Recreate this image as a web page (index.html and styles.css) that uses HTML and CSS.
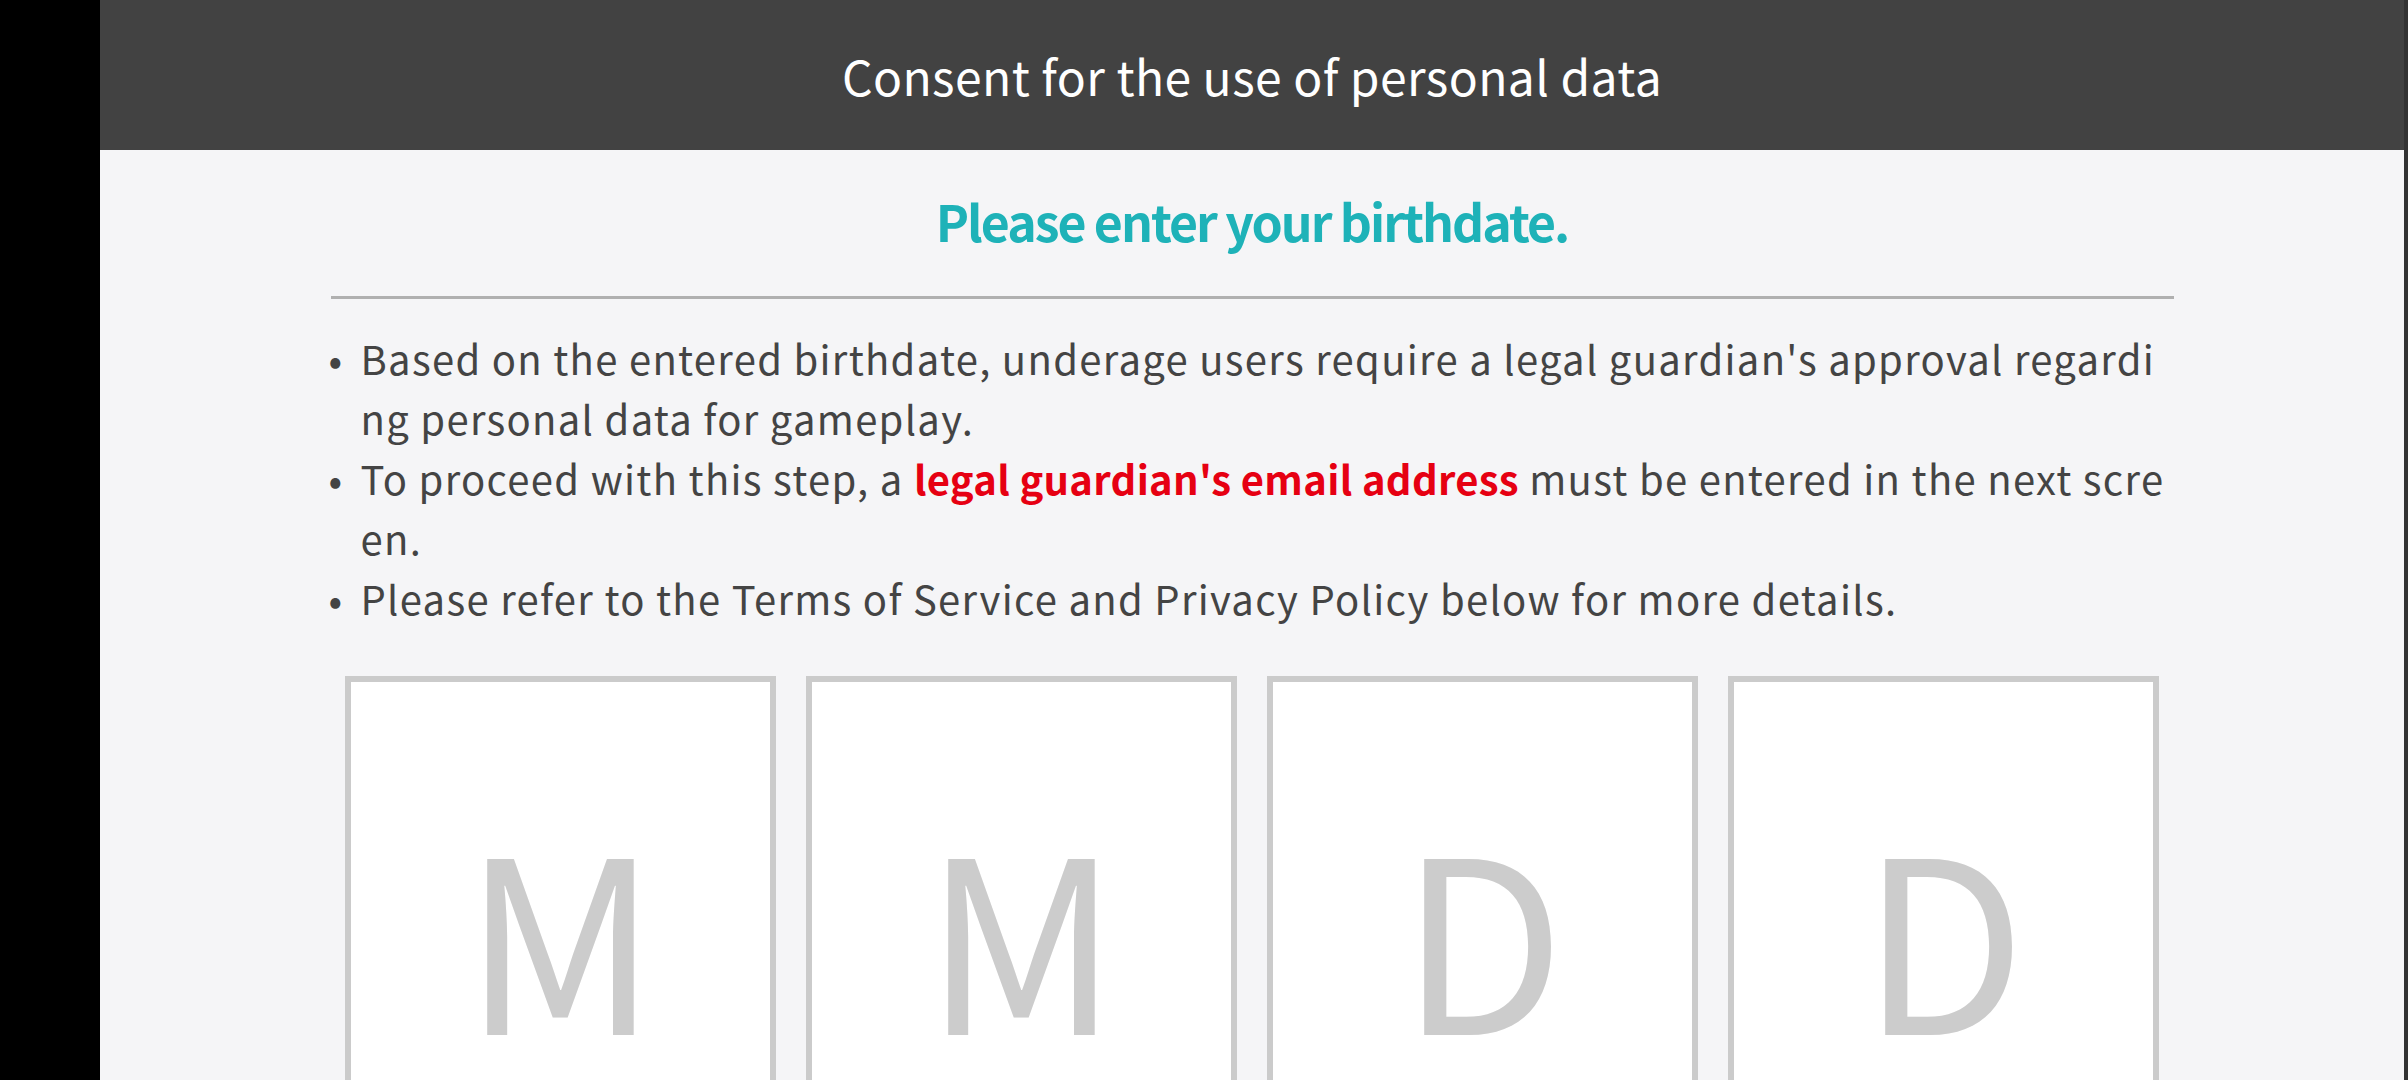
FILE: index.html
```html
<!DOCTYPE html>
<html lang="en">
<head>
<meta charset="utf-8">
<title>Consent for the use of personal data</title>
<link rel="stylesheet" href="styles.css">
</head>
<body>
<div class="app">
  <div class="side-left"></div>
  <main class="panel">
    <header class="topbar">Consent for the use of personal data</header>
    <section class="content">
      <h1 class="subtitle">Please enter your birthdate.</h1>
      <hr class="divider">
      <ul class="notes">
        <li><span class="dot">•</span><span class="txt">Based on the entered birthdate, underage users require a legal guardian's approval regarding personal data for gameplay.</span></li>
        <li><span class="dot">•</span><span class="txt">To proceed with this step, a <strong class="hl">legal guardian's email address</strong> must be entered in the next screen.</span></li>
        <li><span class="dot">•</span><span class="txt">Please refer to the Terms of Service and Privacy Policy below for more details.</span></li>
      </ul>
      <div class="digits">
        <div class="digit">M</div>
        <div class="digit">M</div>
        <div class="digit">D</div>
        <div class="digit">D</div>
      </div>
    </section>
  </main>
  <div class="side-right"></div>
</div>
</body>
</html>
```

FILE: styles.css
```css
html, body {
  margin: 0;
  padding: 0;
  height: 100%;
  overflow: hidden;
  background: #000;
}

body {
  font-family: "Noto Sans CJK JP", "Noto Sans", sans-serif;
}

.app {
  display: flex;
  height: 1080px;
}

.side-left {
  width: 100px;
  flex: none;
  background: #000;
}

.side-right {
  width: 4px;
  flex: none;
  background: #333;
}

.panel {
  flex: 1;
  background: #f5f5f7;
  display: flex;
  flex-direction: column;
  overflow: hidden;
}

.topbar {
  height: 150px;
  line-height: 150px;
  background: #424242;
  color: #fff;
  font-size: 48px;
  letter-spacing: 0.4px;
  text-align: center;
  flex: none;
}

.content {
  width: 1843px;
  margin: 0 auto;
}

.subtitle {
  margin: 31px 0 0;
  font-size: 50px;
  line-height: 78px;
  font-weight: 700;
  letter-spacing: -2px;
  color: #1eb2b8;
  text-align: center;
}

.divider {
  margin: 37px 0 0;
  border: 0;
  height: 3px;
  background: #b0b0b0;
}

.notes {
  list-style: none;
  margin: 29px 0 0;
  padding: 0;
  font-size: 40px;
  line-height: 60px;
  color: #444;
}

.notes li {
  display: flex;
}

.dot {
  flex: none;
  width: 32px;
  margin-left: -2px;
}

.txt {
  width: 1808px;
  word-break: break-all;
  letter-spacing: 1.3px;
}

.hl {
  color: #e60012;
  font-weight: 700;
  letter-spacing: 0.3px;
}

.digits {
  display: flex;
  justify-content: center;
  gap: 30px;
  margin-top: 48px;
}

.digit {
  width: 431px;
  height: 600px;
  box-sizing: border-box;
  border: 6px solid #cbcbcb;
  background: #fff;
  color: #cccccc;
  font-size: 240px;
  line-height: 240px;
  text-align: center;
  padding-top: 129px;
}
```
